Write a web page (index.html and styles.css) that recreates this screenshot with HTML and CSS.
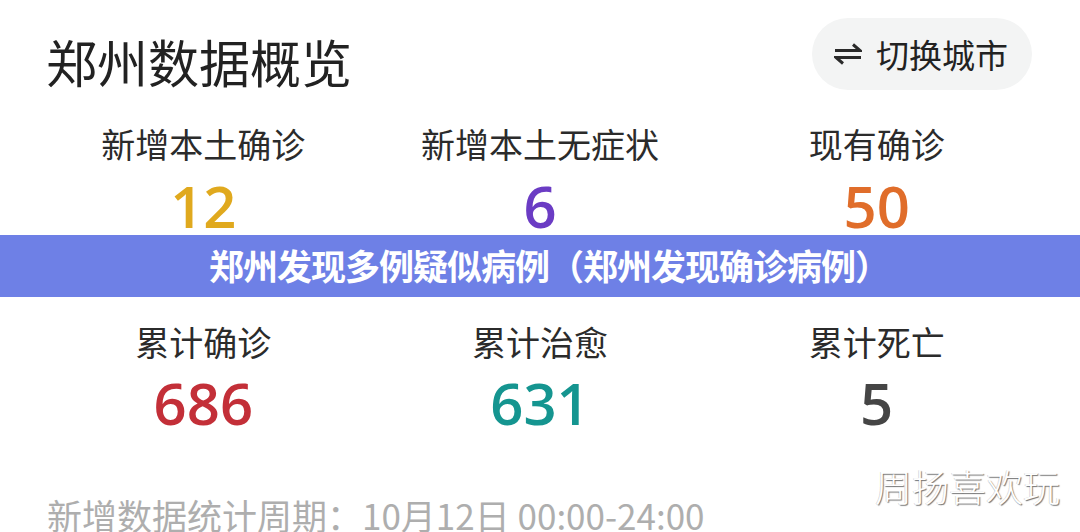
FILE: index.html
```html
<!DOCTYPE html>
<html lang="zh-CN">
<head>
<meta charset="UTF-8" />
<meta name="viewport" content="width=device-width, initial-scale=1" />
<title>郑州数据概览</title>
<link rel="stylesheet" href="styles.css">
</head>
<body>
<div class="page">
  <header class="top">
    <h1>郑州数据概览</h1>
    <button class="city-btn">
      <svg class="swap-icon" viewBox="0 0 28 22" width="28" height="22">
        <path d="M1 7.5h25L19 1.5" />
        <path d="M27 14.5H2l7 6" />
      </svg>
      <span>切换城市</span>
    </button>
  </header>

  <section class="stats">
    <div class="stat">
      <div class="stat-label">新增本土确诊</div>
      <div class="stat-num gold">12</div>
    </div>
    <div class="stat">
      <div class="stat-label">新增本土无症状</div>
      <div class="stat-num purple">6</div>
    </div>
    <div class="stat">
      <div class="stat-label">现有确诊</div>
      <div class="stat-num orange">50</div>
    </div>
  </section>

  <div class="banner">郑州发现多例疑似病例（郑州发现确诊病例）</div>

  <section class="stats second">
    <div class="stat">
      <div class="stat-label">累计确诊</div>
      <div class="stat-num red">686</div>
    </div>
    <div class="stat">
      <div class="stat-label">累计治愈</div>
      <div class="stat-num teal">631</div>
    </div>
    <div class="stat">
      <div class="stat-label">累计死亡</div>
      <div class="stat-num grey">5</div>
    </div>
  </section>

  <p class="period">新增数据统计周期：10月12日 00:00-24:00</p>

  <div class="mark">周扬喜欢玩</div>
</div>
</body>
</html>
```

FILE: styles.css
```css
body {
  margin: 0;
  background: #fff;
  font-family: "Noto Sans CJK SC", "Noto Sans", sans-serif;
  color: #262626;
}
.page {
  position: relative;
  width: 1080px;
  height: 532px;
  overflow: hidden;
}

/* header */
.top {
  display: flex;
  justify-content: space-between;
  align-items: flex-start;
  padding: 18px 48px 0 46px;
}
.top h1 {
  margin: 8px 0 0;
  font-size: 51px;
  line-height: 70px;
  font-weight: 400;
  color: #222;
}
.city-btn {
  display: flex;
  align-items: center;
  gap: 14px;
  height: 72px;
  padding: 0 24px 0 22px;
  border: none;
  border-radius: 36px;
  background: #f3f4f4;
  font-family: inherit;
  font-size: 33px;
  color: #222;
}
.swap-icon {
  fill: none;
  stroke: #2a2a2a;
  stroke-width: 3;
}

/* stat grid */
.stats {
  display: grid;
  grid-template-columns: repeat(3, 1fr);
  padding: 0 35px;
  margin-top: 28px;
}
.stat {
  text-align: center;
}
.stat-label {
  font-size: 34px;
  line-height: 40px;
  color: #2b2b2b;
}
.stat-num {
  font-family: "Open Sans", "Noto Sans", sans-serif;
  font-weight: 600;
  font-size: 58px;
  line-height: 58px;
  margin-top: 13px;
}
.gold { color: #e0a91e; }
.purple { color: #6b3cc4; }
.orange { color: #e06d2a; }
.red { color: #c32f38; }
.teal { color: #159590; }
.grey { color: #454545; }

.banner {
  background: #6e80e6;
  height: 62px;
  line-height: 60px;
  padding-left: 18px;
  text-align: center;
  color: #fff;
  font-size: 35px;
  font-weight: 700;
  letter-spacing: -1px;
}
.stats.second {
  margin-top: 25px;
}
.stats.second .stat-num {
  margin-top: 12px;
}

.period {
  margin: 63px 0 0 47px;
  font-size: 35px;
  line-height: 40px;
  color: #aeaeae;
}

/* watermark */
.mark {
  position: absolute;
  right: 20px;
  top: 459px;
  font-size: 37px;
  font-weight: 300;
  color: #fff;
  text-shadow: 1px 1px 1px rgba(0, 0, 0, 0.55), -1px 0 0 rgba(0, 0, 0, 0.15);
}
```
